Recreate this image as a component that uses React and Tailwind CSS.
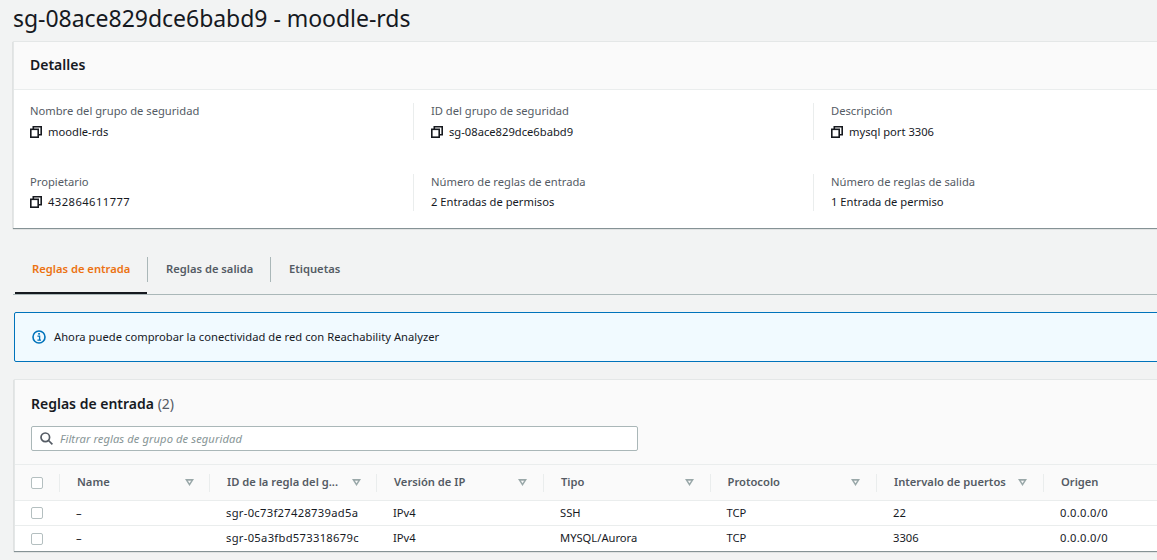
import React from 'react'

const CopyIcon = () => (
  <svg width="12" height="12" viewBox="0 0 12 12" fill="none" stroke="#16191f" strokeWidth="1.6" className="shrink-0">
    <rect x="0.8" y="3.3" width="7.4" height="7.9" />
    <path d="M3.3 3V0.8H11.2V8.7H8.5" />
  </svg>
)

const InfoIcon = () => (
  <svg width="14" height="14" viewBox="0 0 14 14" fill="none" className="shrink-0">
    <circle cx="7" cy="7" r="6" stroke="#0073bb" strokeWidth="1.6" />
    <rect x="6.2" y="3" width="1.7" height="1.7" fill="#0073bb" />
    <path d="M5.4 6.1H7.6V10M5.4 10.2H9" stroke="#0073bb" strokeWidth="1.3" />
  </svg>
)

const SearchIcon = () => (
  <svg width="13" height="13" viewBox="0 0 13 13" fill="none" stroke="#545b64" strokeWidth="1.7" className="shrink-0">
    <circle cx="5.3" cy="5.3" r="4.3" />
    <path d="M8.5 8.5L12.4 12.4" />
  </svg>
)

const SortIcon = () => (
  <svg width="9" height="7" viewBox="0 0 9 7" fill="#9aa8a9" className="shrink-0">
    <path d="M0 0H9L4.5 7ZM2.9 1.7L4.5 4.2L6.1 1.7Z" fillRule="evenodd" />
  </svg>
)

const Checkbox = () => (
  <span className="block w-3 h-3 shrink-0 rounded-[2px] border border-[#b4bfc0] bg-white" />
)

const details = [
  [
    { label: 'Nombre del grupo de seguridad', value: 'moodle-rds', copy: true },
    { label: 'ID del grupo de seguridad', value: 'sg-08ace829dce6babd9', copy: true },
    { label: 'Descripción', value: 'mysql port 3306', copy: true },
  ],
  [
    { label: 'Propietario', value: '432864611777', copy: true, track: 'tracking-[0.45px]' },
    { label: 'Número de reglas de entrada', value: '2 Entradas de permisos' },
    { label: 'Número de reglas de salida', value: '1 Entrada de permiso' },
  ],
]

const columns = [
  { name: 'Name', width: 'w-[150px]', pad: 'pr-[15px]' },
  { name: 'ID de la regla del g...', width: 'w-[167px]', pad: 'pr-[15px]' },
  { name: 'Versión de IP', width: 'w-[167px]', pad: 'pr-[16px]' },
  { name: 'Tipo', width: 'w-[166.5px]', pad: 'pr-[16px]' },
  { name: 'Protocolo', width: 'w-[166.5px]', pad: 'pr-[16px]' },
  { name: 'Intervalo de puertos', width: 'w-[167px]', pad: 'pr-[16px]' },
  { name: 'Origen', width: 'w-[100px]', pad: 'pr-[16px]', noSort: true },
]

const rows = [
  ['–', 'sgr-0c73f27428739ad5a', 'IPv4', 'SSH', 'TCP', '22', '0.0.0.0/0'],
  ['–', 'sgr-05a3fbd573318679c', 'IPv4', 'MYSQL/Aurora', 'TCP', '3306', '0.0.0.0/0'],
]

export default function App() {
  return (
    <div className="w-[1157px] h-[560px] overflow-hidden bg-[#f2f3f3] text-[#16191f] text-[11.2px] font-['Noto_Sans',sans-serif]">
      <div className="w-[1240px] pl-[13px]">
        <h1 className="h-[41px] pt-[2px] text-[23px] leading-[33px] font-normal tracking-[-0.03px]">sg-08ace829dce6babd9 - moodle-rds</h1>

        {/* detalles */}
        <section className="h-[187px] bg-white border-l border-t border-[#e4e7e7] shadow-[0_1px_1px_rgba(0,28,36,0.45)]">
          <div className="h-[48px] flex items-center pl-[16px] pb-[2px] bg-[#fafafa] border-b border-[#eaeded] text-[14px] font-semibold">
            Detalles
          </div>
          <div className="pl-[16px] pt-[13px]">
            {details.map((row, i) => (
              <div key={i} className={`flex h-[37px] ${i === 1 ? 'mt-[34px]' : ''}`}>
                {row.map((d, j) => (
                  <div key={j} className={`${j === 0 ? 'w-[383px]' : 'w-[400px] pl-[17px] border-l border-[#eaeded]'} flex flex-col ${i === 0 ? 'gap-[5px]' : 'gap-[4px]'}`}>
                    <span className="leading-[16px] text-[#545b64]">{d.label}</span>
                    <span className={`flex items-center gap-[6px] leading-[16px] ${d.track || ''}`}>
                      {d.copy && <CopyIcon />}
                      {d.value}
                    </span>
                  </div>
                ))}
              </div>
            ))}
          </div>
        </section>

        {/* tabs */}
        <div className="mt-[29px] h-[38px] flex items-start border-b border-[#aab7b8]">
          <div className="ml-[2px] w-[132px] h-[37px] pl-[17px] pt-[3px] border-b-[2px] border-[#16191f] font-semibold leading-[18px] text-[#ec7211]">
            Reglas de entrada
          </div>
          <div className="w-[123px] h-[25px] pl-[18px] pt-[3px] border-l border-[#aab7b8] font-semibold leading-[18px] text-[#545b64]">
            Reglas de salida
          </div>
          <div className="h-[25px] pl-[18px] pt-[3px] border-l border-[#aab7b8] font-semibold leading-[18px] text-[#545b64]">
            Etiquetas
          </div>
        </div>

        {/* aviso */}
        <div className="ml-px mt-[17px] h-[50px] flex items-center gap-[8px] pl-[17px] bg-[#f1faff] border border-[#0073bb] rounded-[2px]">
          <InfoIcon />
          <span className="tracking-[0.03px]">Ahora puede comprobar la conectividad de red con Reachability Analyzer</span>
        </div>

        {/* reglas */}
        <section className="ml-px mt-[17px] h-[172px] bg-white border-l border-t border-[#e4e7e7] shadow-[0_1px_1px_rgba(0,28,36,0.45)]">
          <div className="h-[85px] bg-[#fafafa] border-b border-[#eaeded] pl-[16px] pt-[14px]">
            <h2 className="text-[14px] leading-[20px] font-semibold">
              Reglas de entrada <span className="font-normal text-[#545b64]">(2)</span>
            </h2>
            <div className="mt-[12px] w-[607px] h-[25px] flex items-center gap-[7px] pl-[8px] bg-white border border-[#aab7b8] rounded-[2px]">
              <SearchIcon />
              <span className="italic text-[#879596] pt-px tracking-[0.08px]">Filtrar reglas de grupo de seguridad</span>
            </div>
          </div>

          <div className="h-[36px] flex items-center bg-[#fafafa] border-b border-[#eaeded] font-semibold text-[#545b64]">
            <div className="w-[44px] pl-[16px]">
              <Checkbox />
            </div>
            {columns.map((c) => (
              <div key={c.name} className={`${c.width} ${c.pad} h-[18px] flex items-center justify-between border-l border-[#eaeded] pl-[17px]`}>
                <span className="whitespace-nowrap">{c.name}</span>
                {!c.noSort && <SortIcon />}
              </div>
            ))}
          </div>

          {rows.map((r, i) => (
            <div key={i} className={`h-[25px] flex items-center ${i === 0 ? 'border-b border-[#eaeded]' : ''}`}>
              <div className="w-[44px] pl-[16px]">
                <Checkbox />
              </div>
              {r.map((cell, j) => (
                <div key={j} className={`${columns[j].width} pl-[17px] whitespace-nowrap ${j === 1 ? 'tracking-[0.3px]' : ''} ${j === 6 ? 'tracking-[0.3px]' : ''}`}>{cell}</div>
              ))}
            </div>
          ))}
        </section>
      </div>
    </div>
  )
}
